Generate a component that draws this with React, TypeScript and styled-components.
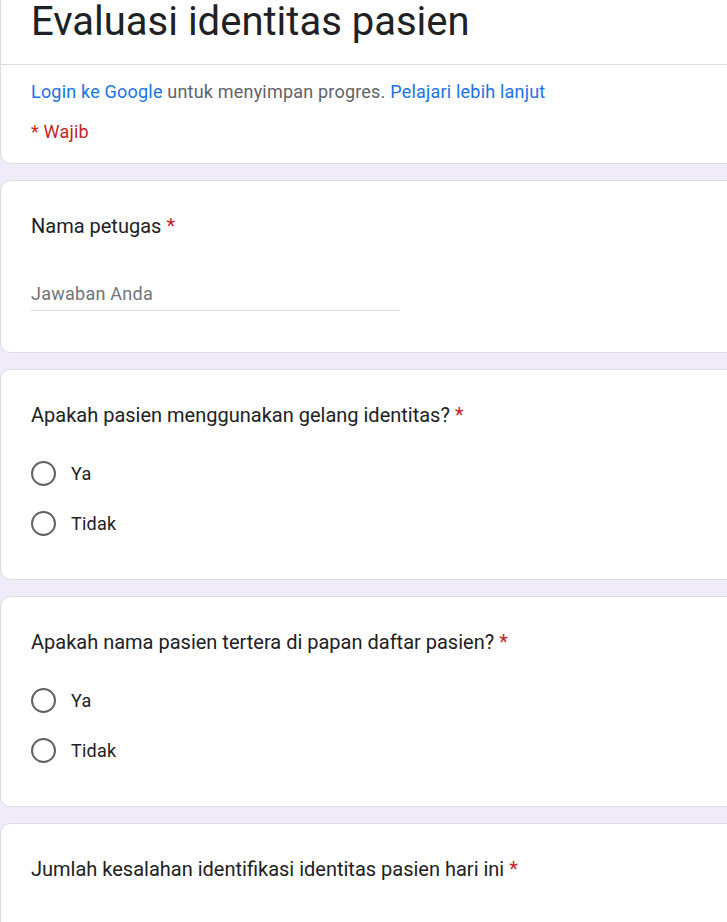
import styled, { createGlobalStyle } from "styled-components";

const GlobalStyle = createGlobalStyle`
  html, body {
    margin: 0;
    padding: 0;
    background: #f0ebf8;
    overflow: hidden;
  }
  body {
    font-family: Roboto, "Liberation Sans", Arial, sans-serif;
    color: #202124;
  }
`;

const Page = styled.main`
  display: flex;
  flex-direction: column;
  gap: 16px;
  width: 800px;
`;

const Card = styled.section<{ $first?: boolean }>`
  background: #fff;
  border: 1px solid #dadce0;
  border-radius: 10px;
  ${({ $first }) =>
    $first &&
    `
    border-top: none;
    border-top-left-radius: 0;
    border-top-right-radius: 0;
  `}
`;

const TitleBlock = styled.div`
  padding: 0 30px;
  height: 64px;
  border-bottom: 1px solid #dadce0;
`;

const Title = styled.h1`
  margin: 0;
  font-size: 40px;
  font-weight: 400;
  line-height: 44px;
  color: #202124;
`;

const Intro = styled.div`
  padding: 15px 30px 19px;
  display: flex;
  flex-direction: column;
  gap: 16px;
`;

const IntroLine = styled.p`
  margin: 0;
  font-size: 18px;
  letter-spacing: 0.2px;
  line-height: 24px;
  color: #5f6368;
`;

const Link = styled.a`
  color: #1a73e8;
  text-decoration: none;
`;

const Required = styled.p`
  margin: 0;
  font-size: 18px;
  letter-spacing: 0.2px;
  line-height: 24px;
  color: #c5221f;
`;

const Question = styled.div<{ $choices?: boolean }>`
  padding: 31px 30px ${({ $choices }) => ($choices ? "31px" : "30px")};
  display: flex;
  flex-direction: column;
`;

const Label = styled.div`
  font-size: 20px;
  line-height: 28px;
  color: #202124;
`;

const Star = styled.span`
  color: #c5221f;
  margin-left: 5px;
`;

const TextInput = styled.div`
  margin-top: 40px;
  margin-bottom: 11px;
  width: 369px;
  font-size: 18px;
  letter-spacing: 0.25px;
  line-height: 28px;
  color: #70757a;
  border-bottom: 1px solid #dadce0;
  padding-bottom: 2px;
`;

const Options = styled.div`
  display: flex;
  flex-direction: column;
  margin-top: 19px;
`;

const Option = styled.label`
  display: flex;
  align-items: center;
  gap: 15px;
  height: 50px;
  font-size: 18px;
  letter-spacing: 0.25px;
  color: #202124;
`;

const Radio = styled.span`
  box-sizing: border-box;
  width: 25px;
  height: 25px;
  border: 2.5px solid #5f6368;
  border-radius: 50%;
`;

const radioQuestions = [
  "Apakah pasien menggunakan gelang identitas?",
  "Apakah nama pasien tertera di papan daftar pasien?",
];

export default function App() {
  return (
    <>
      <GlobalStyle />
      <Page>
        <Card $first>
          <TitleBlock>
            <Title>Evaluasi identitas pasien</Title>
          </TitleBlock>
          <Intro>
            <IntroLine>
              <Link href="#">Login ke Google</Link> untuk menyimpan progres.{" "}
              <Link href="#">Pelajari lebih lanjut</Link>
            </IntroLine>
            <Required>* Wajib</Required>
          </Intro>
        </Card>

        <Card>
          <Question>
            <Label>
              Nama petugas<Star>*</Star>
            </Label>
            <TextInput>Jawaban Anda</TextInput>
          </Question>
        </Card>

        {radioQuestions.map((q) => (
          <Card key={q}>
            <Question $choices>
              <Label>
                {q}
                <Star>*</Star>
              </Label>
              <Options>
                {["Ya", "Tidak"].map((o) => (
                  <Option key={o}>
                    <Radio />
                    {o}
                  </Option>
                ))}
              </Options>
            </Question>
          </Card>
        ))}

        <Card>
          <Question>
            <Label>
              Jumlah kesalahan identifikasi identitas pasien hari ini<Star>*</Star>
            </Label>
            <TextInput>Jawaban Anda</TextInput>
          </Question>
        </Card>
      </Page>
    </>
  );
}
